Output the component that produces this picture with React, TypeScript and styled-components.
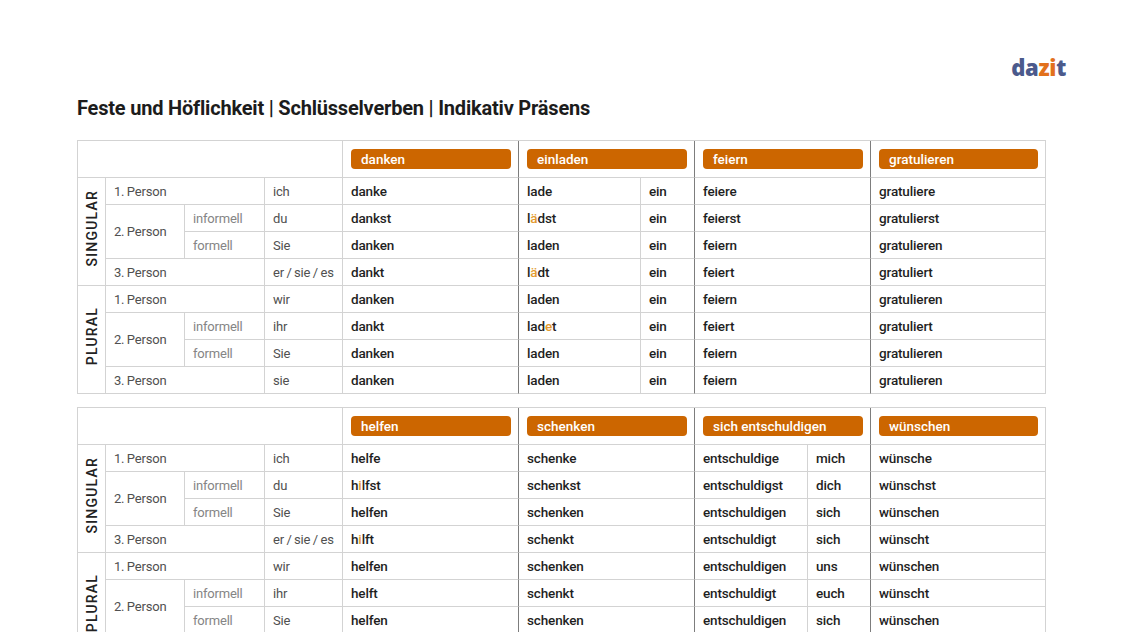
import React from "react";
import styled, { createGlobalStyle } from "styled-components";

const GlobalStyle = createGlobalStyle`
  *, *::before, *::after { box-sizing: border-box; }
  html, body { margin: 0; padding: 0; background: #ffffff; }
  body { font-family: Roboto, "Noto Sans", sans-serif; color: #222; }
`;

const Page = styled.div`
  padding: 54px 57px 0 77px;
  width: 1123px;
`;

const LogoRow = styled.div`
  display: flex;
  justify-content: flex-end;
  height: 26px;
`;

const Logo = styled.div`
  font-family: "Open Sans", "Noto Sans", sans-serif;
  font-weight: 800;
  font-size: 22px;
  line-height: 26px;
  letter-spacing: -0.3px;
  color: #4b5a8c;
`;

const LogoAccent = styled.span`
  color: #e2701c;
`;

const Title = styled.h1`
  margin: 15px 0 0 0;
  font-family: Roboto, "Noto Sans", sans-serif;
  font-size: 20px;
  line-height: 26px;
  font-weight: 700;
  color: #1c1c1c;
  letter-spacing: -0.2px;
`;

const Tables = styled.div`
  margin-top: 19px;
  width: 968px;
  display: flex;
  flex-direction: column;
  gap: 13px;
`;

const Table = styled.table`
  width: 968px;
  table-layout: fixed;
  border-collapse: separate;
  border-spacing: 0;
  border-top: 1px solid #d3d3d3;
  border-left: 1px solid #d3d3d3;
  font-size: 13.5px;
`;

const Cell = styled.td<{ $dark?: boolean }>`
  height: 27px;
  padding: 0 4px 0 8px;
  border-right: 1px solid ${(p) => (p.$dark ? "#7d7d7d" : "#d3d3d3")};
  border-bottom: 1px solid #d3d3d3;
  vertical-align: middle;
  white-space: nowrap;
  overflow: hidden;
`;

const HeadCell = styled(Cell)`
  height: 37px;
  padding: 0 7px 0 8px;
`;

const GroupCell = styled(Cell)`
  padding: 0 0 4px 0;
  text-align: center;
`;

const GroupLabel = styled.span`
  display: inline-block;
  writing-mode: vertical-rl;
  transform: rotate(180deg);
  font-weight: 500;
  font-size: 14px;
  letter-spacing: 1.2px;
  color: #222;
`;

const LabelCell = styled(Cell)<{ $muted?: boolean }>`
  color: ${(p) => (p.$muted ? "#858585" : "#505050")};
  font-weight: 400;
  font-size: 13px;
  letter-spacing: -0.2px;
  word-spacing: -0.5px;
`;

const VerbCell = styled(Cell)`
  color: #1f1f1f;
  font-weight: 500;
  letter-spacing: -0.15px;
`;

const Badge = styled.div`
  height: 20px;
  border-radius: 4px;
  background: #cc6600;
  color: #ffffff;
  font-weight: 500;
  font-size: 13.5px;
  line-height: 20px;
  padding-left: 10px;
`;

const Hi = styled.span`
  color: #e39a2d;
`;

type Verb = { name: string; split?: [number, number]; width: number };
type Row = { forms: (string | [string, string])[] };

const renderForm = (s: string) => {
  const parts = s.split(/(\[[^\]]+\])/);
  return parts.map((p, i) =>
    p.startsWith("[") ? <Hi key={i}>{p.slice(1, -1)}</Hi> : <React.Fragment key={i}>{p}</React.Fragment>
  );
};

const persons = [
  { group: "SINGULAR", rows: [
    { kind: "p1", label: "1. Person", pron: "ich" },
    { kind: "inf", label: "2. Person", pron: "du" },
    { kind: "form", pron: "Sie" },
    { kind: "p1", label: "3. Person", pron: "er / sie / es" },
  ]},
  { group: "PLURAL", rows: [
    { kind: "p1", label: "1. Person", pron: "wir" },
    { kind: "inf", label: "2. Person", pron: "ihr" },
    { kind: "form", pron: "Sie" },
    { kind: "p1", label: "3. Person", pron: "sie" },
  ]},
];

const ConjTable: React.FC<{ verbs: Verb[]; rows: Row[] }> = ({ verbs, rows }) => (
  <Table>
    <colgroup>
      <col style={{ width: 28 }} />
      <col style={{ width: 79 }} />
      <col style={{ width: 80 }} />
      <col style={{ width: 78 }} />
      {verbs.map((v, i) =>
        v.split ? (
          <React.Fragment key={i}>
            <col style={{ width: v.split[0] }} />
            <col style={{ width: v.split[1] }} />
          </React.Fragment>
        ) : (
          <col key={i} style={{ width: v.width }} />
        )
      )}
    </colgroup>
    <tbody>
      <tr>
        <HeadCell colSpan={4} />
        {verbs.map((v, i) => (
          <HeadCell key={i} colSpan={v.split ? 2 : 1} $dark={i < verbs.length - 1}>
            <Badge>{v.name}</Badge>
          </HeadCell>
        ))}
      </tr>
      {persons.flatMap((g, gi) =>
        g.rows.map((r, ri) => {
          const row = rows[gi * 4 + ri];
          return (
            <tr key={`${gi}-${ri}`}>
              {ri === 0 && (
                <GroupCell rowSpan={4}>
                  <GroupLabel>{g.group}</GroupLabel>
                </GroupCell>
              )}
              {r.kind === "p1" && <LabelCell colSpan={2}>{r.label}</LabelCell>}
              {r.kind === "inf" && <LabelCell rowSpan={2}>{r.label}</LabelCell>}
              {r.kind === "inf" && <LabelCell $muted>informell</LabelCell>}
              {r.kind === "form" && <LabelCell $muted>formell</LabelCell>}
              <LabelCell>{r.pron}</LabelCell>
              {row.forms.map((f, fi) => {
                const dark = fi < verbs.length - 1;
                if (Array.isArray(f)) {
                  return (
                    <React.Fragment key={fi}>
                      <VerbCell>{renderForm(f[0])}</VerbCell>
                      <VerbCell $dark={dark}>{renderForm(f[1])}</VerbCell>
                    </React.Fragment>
                  );
                }
                return (
                  <VerbCell key={fi} $dark={dark}>
                    {renderForm(f)}
                  </VerbCell>
                );
              })}
            </tr>
          );
        })
      )}
    </tbody>
  </Table>
);

const verbs1: Verb[] = [
  { name: "danken", width: 176 },
  { name: "einladen", width: 176, split: [122, 54] },
  { name: "feiern", width: 176 },
  { name: "gratulieren", width: 175 },
];

const rows1: Row[] = [
  { forms: ["danke", ["lade", "ein"], "feiere", "gratuliere"] },
  { forms: ["dankst", ["l[ä]dst", "ein"], "feierst", "gratulierst"] },
  { forms: ["danken", ["laden", "ein"], "feiern", "gratulieren"] },
  { forms: ["dankt", ["l[ä]dt", "ein"], "feiert", "gratuliert"] },
  { forms: ["danken", ["laden", "ein"], "feiern", "gratulieren"] },
  { forms: ["dankt", ["lad[e]t", "ein"], "feiert", "gratuliert"] },
  { forms: ["danken", ["laden", "ein"], "feiern", "gratulieren"] },
  { forms: ["danken", ["laden", "ein"], "feiern", "gratulieren"] },
];

const verbs2: Verb[] = [
  { name: "helfen", width: 176 },
  { name: "schenken", width: 176 },
  { name: "sich entschuldigen", width: 176, split: [113, 63] },
  { name: "wünschen", width: 175 },
];

const rows2: Row[] = [
  { forms: ["helfe", "schenke", ["entschuldige", "mich"], "wünsche"] },
  { forms: ["h[i]lfst", "schenkst", ["entschuldigst", "dich"], "wünschst"] },
  { forms: ["helfen", "schenken", ["entschuldigen", "sich"], "wünschen"] },
  { forms: ["h[i]lft", "schenkt", ["entschuldigt", "sich"], "wünscht"] },
  { forms: ["helfen", "schenken", ["entschuldigen", "uns"], "wünschen"] },
  { forms: ["helft", "schenkt", ["entschuldigt", "euch"], "wünscht"] },
  { forms: ["helfen", "schenken", ["entschuldigen", "sich"], "wünschen"] },
  { forms: ["helfen", "schenken", ["entschuldigen", "sich"], "wünschen"] },
];

export default function App() {
  return (
    <>
      <GlobalStyle />
      <Page>
        <LogoRow>
          <Logo>
            da<LogoAccent>zi</LogoAccent>t
          </Logo>
        </LogoRow>
        <Title>Feste und Höflichkeit | Schlüsselverben | Indikativ Präsens</Title>
        <Tables>
          <ConjTable verbs={verbs1} rows={rows1} />
          <ConjTable verbs={verbs2} rows={rows2} />
        </Tables>
      </Page>
    </>
  );
}
